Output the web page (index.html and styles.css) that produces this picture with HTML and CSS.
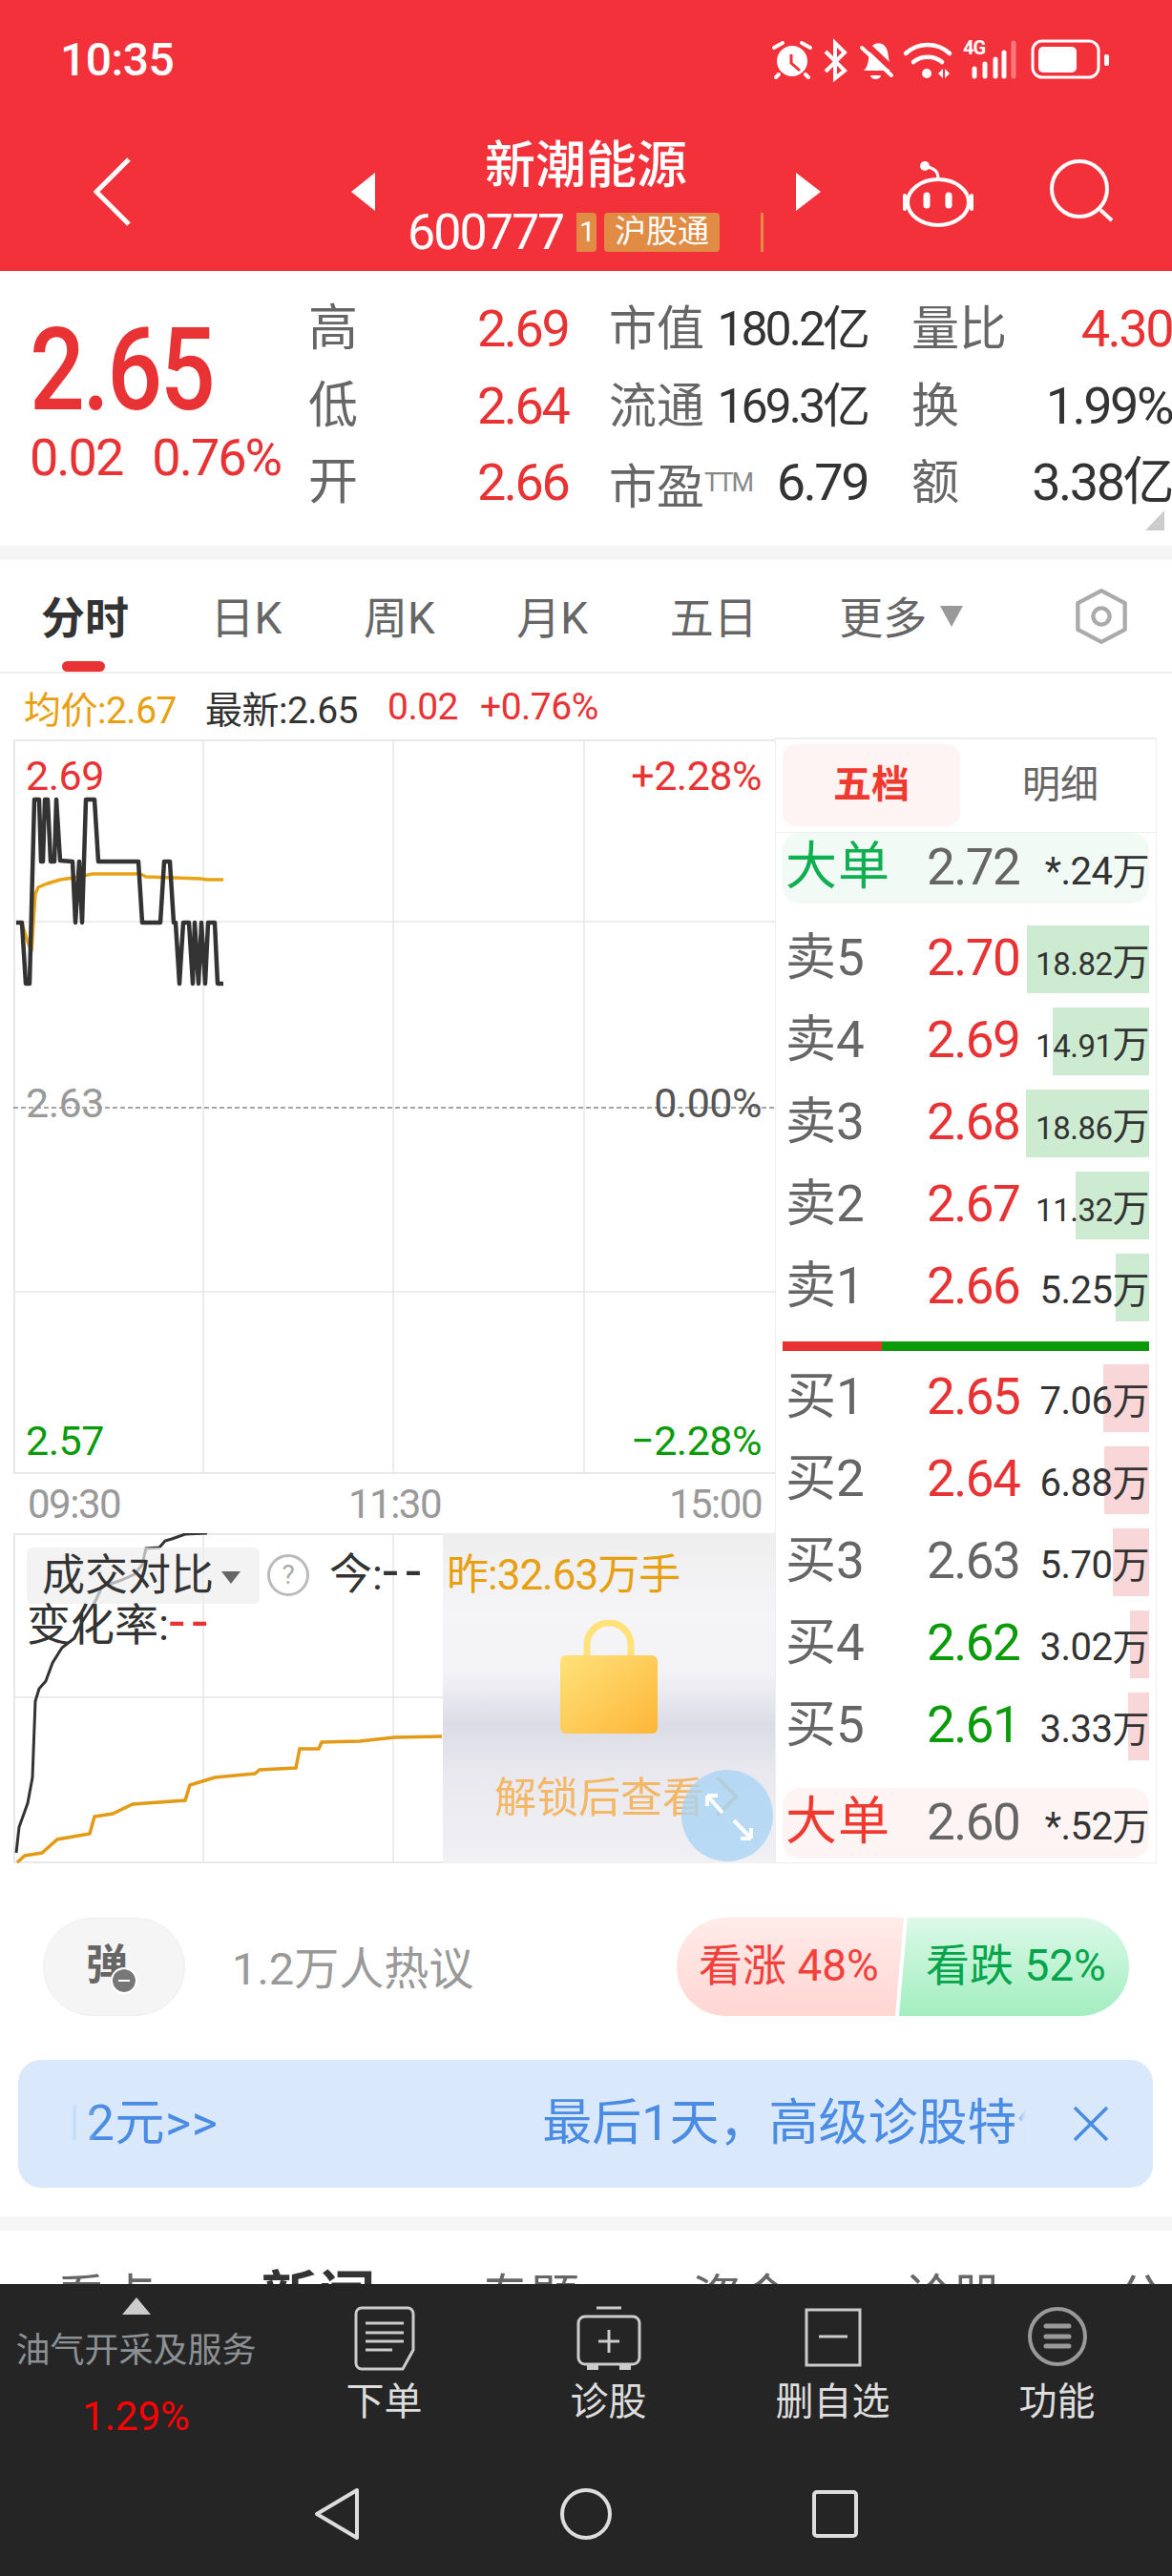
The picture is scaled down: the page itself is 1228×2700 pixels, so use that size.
FILE: index.html
```html
<!DOCTYPE html>
<html lang="zh-CN">
<head>
    <meta charset="UTF-8">
    <meta name="viewport" content="width=device-width, initial-scale=1.0">
    <title>新潮能源 600777</title>
    <link rel="stylesheet" href="styles.css">
</head>
<body>
<div class="page">
    <header class="header">
        <div class="status">
            <span class="clock">10:35</span>
            <svg class="status-icons" viewBox="800 30 370 60" width="370" height="60">
                <circle cx="830" cy="62" r="16" fill="#fff"/>
                <path d="M829 55v9l9 8" fill="none" stroke="#f2313a" stroke-width="3"/>
                <path d="M811 48l9-5M840 43l9 5M816 76l-3 3M844 76l3 3" stroke="#fff" stroke-width="4" stroke-linecap="round"/>
                <path d="M865 52l20 20-10 8V43l10 10-20 20" fill="none" stroke="#fff" stroke-width="4"/>
                <path d="M914 46c5-5 14-3 16 6 1 5 1 8 2 11zM905 72c5-4 5-12 6-20l19 18 3 2z" fill="#fff"/>
                <path d="M903 48l31 29" stroke="#fff" stroke-width="4" stroke-linecap="round"/>
                <path d="M912 77h11a5.5 4 0 0 1-11 0z" fill="#fff"/>
                <path d="M949 54c13-12 33-12 46 0M957 63c8-7 22-7 30 0" fill="none" stroke="#fff" stroke-width="4.5" stroke-linecap="round"/>
                <circle cx="971" cy="75" r="5" fill="#fff"/>
                <path d="M983 75l5-5v10zM990 70l5 5-5 5z" fill="#fff"/>
                <text x="1009" y="55" class="net">4G</text>
                <path d="M1021 70v8M1032 65v13M1043 60v18M1052 53v25" stroke="#fff" stroke-width="5" stroke-linecap="round"/>
                <path d="M1062 43v35" stroke="#fff" stroke-opacity=".35" stroke-width="5" stroke-linecap="round"/>
                <rect x="1082" y="41" width="69" height="38" rx="10" fill="none" stroke="#fff" stroke-width="3"/>
                <rect x="1088" y="47" width="40" height="27" rx="5" fill="#fff"/>
                <rect x="1157" y="55" width="5" height="12" rx="2" fill="#fff"/>
            </svg>
        </div>
        <div class="nav">
            <div class="nav-left">
                <svg width="40" height="72" viewBox="0 0 40 72"><path d="M37 2L3 36l34 34" fill="none" stroke="#fff" stroke-width="5"/></svg>
                <span class="tri-left"></span>
            </div>
            <div class="nav-title">
                <div class="stock-name">新潮能源</div>
                <div class="stock-code">
                    <span class="code">600777</span>
                    <span class="tag tag-cut">1</span>
                    <span class="tag">沪股通</span>
                    <span class="tag-sliver"></span>
                </div>
            </div>
            <div class="nav-right">
                <span class="tri-right"></span>
                <svg class="robot" width="80" height="74" viewBox="0 0 80 74">
                    <ellipse cx="40" cy="48" rx="32" ry="24" fill="none" stroke="#fff" stroke-width="4"/>
                    <path d="M5 41v14M75 41v14" stroke="#fff" stroke-width="4" stroke-linecap="round"/>
                    <path d="M28 41v10M51 41v10" stroke="#fff" stroke-width="7" stroke-linecap="round"/>
                    <path d="M40 23c0-7-4-11-12-12" fill="none" stroke="#fff" stroke-width="3"/>
                    <circle cx="26" cy="10" r="5" fill="#fff"/>
                </svg>
                <svg class="search" width="70" height="70" viewBox="0 0 70 70">
                    <circle cx="32" cy="32" r="29" fill="none" stroke="#fff" stroke-width="4"/>
                    <path d="M54 54l12 11" stroke="#fff" stroke-width="4"/>
                </svg>
            </div>
        </div>
    </header>

    <section class="quote">
        <div class="summary">
            <div class="price">2.65</div>
            <div class="change"><span>0.02</span><span>0.76%</span></div>
        </div>
        <div class="stats">
            <span class="stat-label">高</span><span class="stat-up">2.69</span>
            <div class="stat-pair"><span class="stat-name">市值</span><span class="stat-val long">180.2亿</span></div>
            <div class="stat-pair"><span class="stat-name">量比</span><span class="stat-up">4.30</span></div>
            <span class="stat-label">低</span><span class="stat-up">2.64</span>
            <div class="stat-pair"><span class="stat-name">流通</span><span class="stat-val long">169.3亿</span></div>
            <div class="stat-pair"><span class="stat-name">换</span><span class="stat-val">1.99%</span></div>
            <span class="stat-label">开</span><span class="stat-up">2.66</span>
            <div class="stat-pair"><span class="stat-name">市盈<small class="ttm">TTM</small></span><span class="stat-val">6.79</span></div>
            <div class="stat-pair"><span class="stat-name">额</span><span class="stat-val">3.38亿</span></div>
        </div>
        <span class="corner"></span>
    </section>

    <nav class="tabs">
        <span class="tab active">分时</span>
        <span class="tab">日K</span>
        <span class="tab">周K</span>
        <span class="tab">月K</span>
        <span class="tab">五日</span>
        <span class="tab">更多<i class="tab-arrow"></i></span>
        <svg class="tab-setting" width="60" height="58" viewBox="0 0 56 54">
            <path d="M28 2l23 12v26L28 52 5 40V14z" fill="none" stroke="#aaa" stroke-width="4" stroke-linejoin="round"/>
            <circle cx="28" cy="27" r="8" fill="none" stroke="#aaa" stroke-width="4"/>
        </svg>
    </nav>

    <div class="legend">
        <span class="avg">均价:2.67</span>
        <span class="last">最新:2.65</span>
        <span class="up">0.02</span>
        <span class="up">+0.76%</span>
    </div>

    <section class="market">
        <div class="charts">
            <div class="chart-main">
                <svg class="chart-svg" viewBox="14 775 798 770">
                    <path class="frame" d="M15 775V1545M14 776H812M14 1544H812"/>
                    <path class="grid" d="M213 775V1545M412 775V1545M612 775V1545M14 966H812M14 1354H812"/>
                    <path class="mid" d="M14 1161H812"/>
                    <path class="avg-line" d="M17 967L23 968 29 987 33 997 37 937 40 930 50 926 63 922 77 920 97 916 147 916 153 919 210 921 217 922 234 922"/>
                    <path class="price-line" d="M17 967L23 967 27 1031 31 1031 36 838 41 838 43 903 45 903 47 838 50 838 53 903 57 903 59 838 63 902 76 903 79 967 83 903 86 967 90 838 99 838 103 903 145 903 149 967 168 967 172 903 178 903 182 967 184 967 188 1031 192 967 198 967 202 1031 204 967 208 1031 211 967 215 1031 218 967 225 967 228 1031 234 1031"/>
                </svg>
                <span class="axis-l top up">2.69</span>
                <span class="axis-r top up">+2.28%</span>
                <span class="axis-l mid-l">2.63</span>
                <span class="axis-r mid-r">0.00%</span>
                <span class="axis-l low down">2.57</span>
                <span class="axis-r low down">−2.28%</span>
            </div>
            <div class="time-axis"><span>09:30</span><span>11:30</span><span>15:00</span></div>
            <div class="chart-vol">
                <svg class="chart-svg" viewBox="14 1607 798 346">
                    <path class="frame" d="M15 1607V1953M14 1608H812M14 1952H812"/>
                    <path class="grid" d="M213 1607V1953M412 1607V1953M14 1779H812"/>
                    <path class="vol-today" d="M17 1942L20 1915 29 1890 34 1863 37 1783 41 1770 48 1762 55 1743 65 1727 78 1717 86 1700 99 1680 107 1663 125 1657 141 1650 149 1640 153 1623 167 1622 173 1615 180 1613 194 1608 217 1607"/>
                    <path class="vol-yest" d="M18 1952L26 1945 44 1942 60 1928 94 1922 99 1904 118 1901 139 1891 194 1887 199 1871 225 1863 267 1859 272 1855 310 1853 314 1833 334 1833 337 1826 377 1825 413 1821 463 1820"/>
                </svg>
                <div class="locked">
                    <svg class="lock" width="102" height="120" viewBox="0 0 102 120">
                        <defs>
                            <linearGradient id="lockFill" x1="0" y1="0" x2="1" y2="1">
                                <stop offset="0" stop-color="#ffe27a"/>
                                <stop offset="1" stop-color="#fdb638"/>
                            </linearGradient>
                        </defs>
                        <path d="M28 40V26a23 23 0 0 1 46 0V40" fill="none" stroke="#ffe27a" stroke-width="7"/>
                        <rect x="0" y="37" width="102" height="82" rx="6" fill="url(#lockFill)"/>
                    </svg>
                    <div class="unlock">解锁后查看<span class="unlock-arrow"></span></div>
                </div>
                <div class="vol-head">
                    <span class="vol-pill">成交对比<i class="pill-arrow"></i></span>
                    <span class="help">?</span>
                    <span class="today">今:<b class="dash">--</b></span>
                    <span class="yest">昨:32.63万手</span>
                </div>
                <div class="vol-rate">变化率:<b class="dash up">--</b></div>
                <svg class="expand" width="98" height="98" viewBox="0 0 98 98">
                    <circle cx="49" cy="49" r="48" fill="#a9d4f5" fill-opacity=".78"/>
                    <path d="M44 46L28 28M28 28v11M28 28h11M56 54l18 19M74 73V62M74 73H63" fill="none" stroke="#fff" stroke-width="4"/>
                </svg>
            </div>
        </div>

        <aside class="depth">
            <div class="depth-tabs">
                <span class="depth-tab active">五档</span>
                <span class="depth-tab">明细</span>
            </div>
            <div class="row big big-sell">
                <span class="row-label big-label">大单</span>
                <span class="row-price">2.72</span>
                <span class="row-vol">*.24<em>万</em></span>
            </div>
            <div class="rows sell-rows">
                <div class="row"><i class="bar bar-sell" style="width:128px"></i><span class="row-label">卖5</span><span class="row-price up">2.70</span><span class="row-vol long">18.82<em>万</em></span></div>
                <div class="row"><i class="bar bar-sell" style="width:101px"></i><span class="row-label">卖4</span><span class="row-price up">2.69</span><span class="row-vol long">14.91<em>万</em></span></div>
                <div class="row"><i class="bar bar-sell" style="width:129px"></i><span class="row-label">卖3</span><span class="row-price up">2.68</span><span class="row-vol long">18.86<em>万</em></span></div>
                <div class="row"><i class="bar bar-sell" style="width:77px"></i><span class="row-label">卖2</span><span class="row-price up">2.67</span><span class="row-vol long">11.32<em>万</em></span></div>
                <div class="row"><i class="bar bar-sell" style="width:35px"></i><span class="row-label">卖1</span><span class="row-price up">2.66</span><span class="row-vol">5.25<em>万</em></span></div>
            </div>
            <div class="ratio"><i class="ratio-red" style="width:27%"></i></div>
            <div class="rows buy-rows">
                <div class="row"><i class="bar bar-buy" style="width:48px"></i><span class="row-label">买1</span><span class="row-price up">2.65</span><span class="row-vol">7.06<em>万</em></span></div>
                <div class="row"><i class="bar bar-buy" style="width:47px"></i><span class="row-label">买2</span><span class="row-price up">2.64</span><span class="row-vol">6.88<em>万</em></span></div>
                <div class="row"><i class="bar bar-buy" style="width:38px"></i><span class="row-label">买3</span><span class="row-price">2.63</span><span class="row-vol">5.70<em>万</em></span></div>
                <div class="row"><i class="bar bar-buy" style="width:20px"></i><span class="row-label">买4</span><span class="row-price down">2.62</span><span class="row-vol">3.02<em>万</em></span></div>
                <div class="row"><i class="bar bar-buy" style="width:22px"></i><span class="row-label">买5</span><span class="row-price down">2.61</span><span class="row-vol">3.33<em>万</em></span></div>
            </div>
            <div class="row big big-buy">
                <span class="row-label big-label">大单</span>
                <span class="row-price">2.60</span>
                <span class="row-vol">*.52<em>万</em></span>
            </div>
        </aside>
    </section>

    <div class="social">
        <span class="danmu">弹<i class="danmu-off"></i></span>
        <span class="hot">1.2万人热议</span>
        <div class="vote">
            <span class="vote-up">看涨 48%</span>
            <span class="vote-down">看跌 52%</span>
        </div>
    </div>

    <div class="banner">
        <div class="marquee">
            <span class="marquee-a">12元&gt;&gt;</span>
            <span class="marquee-b">最后1天，高级诊股特价</span>
        </div>
        <svg width="40" height="40" viewBox="0 0 40 40"><path d="M3 3l34 34M37 3L3 37" stroke="#4a8ce4" stroke-width="3.5"/></svg>
    </div>

    <div class="news-tabs">
        <span>看点</span>
        <span class="active">新闻</span>
        <span>专题</span>
        <span>资金</span>
        <span>诊股</span>
        <span>公告</span>
    </div>

    <footer class="bottom">
        <div class="toolbar">
            <div class="sector">
                <i class="sector-arrow"></i>
                <span class="sector-name">油气开采及服务</span>
                <span class="sector-rate">1.29%</span>
            </div>
            <div class="tool">
                <svg width="66" height="70" viewBox="0 0 66 70">
                    <path d="M9 3h48a6 6 0 0 1 6 6v38L52 67H9a6 6 0 0 1-6-6V9a6 6 0 0 1 6-6z" fill="none" stroke="#ccc" stroke-width="3"/>
                    <path d="M13 19h40M13 29h40M13 38h40M13 47h28" stroke="#ccc" stroke-width="3"/>
                </svg>
                <span>下单</span>
            </div>
            <div class="tool">
                <svg width="70" height="70" viewBox="0 0 70 70">
                    <path d="M22 3h26" stroke="#ccc" stroke-width="3"/>
                    <rect x="3" y="12" width="64" height="50" rx="7" fill="none" stroke="#ccc" stroke-width="3"/>
                    <path d="M35 26v24M24 38h22" stroke="#ccc" stroke-width="3"/>
                    <path d="M12 62h12v6H12zM46 62h12v6H46z" fill="#ccc"/>
                </svg>
                <span>诊股</span>
            </div>
            <div class="tool">
                <svg width="66" height="70" viewBox="0 0 66 70">
                    <rect x="5" y="5" width="56" height="58" fill="none" stroke="#ccc" stroke-width="3"/>
                    <path d="M18 33h30" stroke="#ccc" stroke-width="3"/>
                </svg>
                <span>删自选</span>
            </div>
            <div class="tool">
                <svg width="66" height="70" viewBox="0 0 66 70">
                    <circle cx="33" cy="33" r="29" fill="none" stroke="#999" stroke-width="4"/>
                    <path d="M21 22h24M21 33h24M21 43h24" stroke="#999" stroke-width="5" stroke-linecap="round"/>
                </svg>
                <span>功能</span>
            </div>
        </div>
        <div class="sysnav">
            <svg width="50" height="56" viewBox="0 0 50 56"><path d="M46 3L4 28l42 25z" fill="none" stroke="#ddd" stroke-width="4" stroke-linejoin="round"/></svg>
            <svg width="56" height="56" viewBox="0 0 56 56"><circle cx="28" cy="28" r="25" fill="none" stroke="#ddd" stroke-width="4"/></svg>
            <svg width="50" height="52" viewBox="0 0 50 52"><rect x="3" y="3" width="44" height="46" rx="3" fill="none" stroke="#ddd" stroke-width="4"/></svg>
        </div>
    </footer>
</div>
</body>
</html>
```

FILE: styles.css
```css
* {
    box-sizing: border-box;
}

body {
    margin: 0;
    font-family: Roboto, "Noto Sans CJK SC", sans-serif;
    color: #333;
    background-color: white;
}

.page {
    position: relative;
    width: 1228px;
    height: 2700px;
    overflow: hidden;
}

.up {
    color: #e83234;
}

.down {
    color: #0a9a0a;
}

/* header */
.header {
    height: 284px;
    background-color: #f2313a;
    color: white;
}

.status {
    height: 124px;
    display: flex;
    align-items: center;
    justify-content: space-between;
    padding: 0 58px 0 63px;
}

.clock {
    font-size: 48px;
    font-weight: 500;
    letter-spacing: -.5px;
}

.net {
    font-size: 20px;
    font-weight: 700;
    letter-spacing: -1px;
    fill: white;
}

.nav {
    height: 160px;
    display: grid;
    grid-template-columns: 394px 440px 394px;
}

.nav-left {
    display: flex;
    align-items: center;
    justify-content: space-between;
    padding: 0 1px 6px 98px;
}

.tri-left {
    border-top: 20px solid transparent;
    border-bottom: 20px solid transparent;
    border-right: 25px solid white;
}

.tri-right {
    border-top: 20px solid transparent;
    border-bottom: 20px solid transparent;
    border-left: 26px solid white;
}

.nav-right {
    display: flex;
    align-items: center;
    padding-bottom: 6px;
}

.robot {
    margin-left: 83px;
}

.search {
    margin-left: 76px;
}

.nav-title {
    padding-top: 20px;
    text-align: center;
}

.stock-name {
    font-size: 53px;
    line-height: 60px;
    font-weight: 500;
}

.stock-code {
    display: flex;
    align-items: center;
    height: 42px;
    margin-top: 18px;
    padding-left: 33px;
}

.code {
    width: 171px;
    font-size: 52px;
    letter-spacing: -2px;
    text-align: left;
}

.tag {
    height: 41px;
    line-height: 40px;
    padding: 0 11px;
    font-size: 33px;
    background-color: #e08c45;
    border-radius: 4px;
    margin-left: 8px;
}

.tag-cut {
    width: 21px;
    padding: 0 0 0 2px;
    margin-left: 6px;
    border-radius: 0 4px 4px 0;
    font-size: 30px;
}

.tag-sliver {
    width: 3px;
    height: 41px;
    margin-left: 43px;
    background-color: #e08c45;
}

/* quote */
.quote {
    position: relative;
    height: 303px;
    display: flex;
    border-bottom: 15px solid #f5f5f5;
}

.summary {
    width: 323px;
    padding: 54px 0 0 31px;
    color: #e83234;
}

.price {
    font-size: 120px;
    line-height: 100px;
    font-weight: 500;
    letter-spacing: -3px;
    transform: scaleX(.85);
    transform-origin: left;
}

.change {
    display: flex;
    gap: 31px;
    margin-top: 18px;
    font-size: 54px;
    line-height: 48px;
    letter-spacing: -2px;
}

.stats {
    display: grid;
    grid-template-columns: 177px 138px 271px 319px;
    grid-auto-rows: 80.5px;
    padding-top: 21px;
    font-size: 54px;
    line-height: 80px;
    letter-spacing: -2.5px;
}

.stats > :nth-child(4n) {
    margin-left: 46px;
}

.stat-label,
.stat-name {
    font-size: 52px;
    color: #666;
    letter-spacing: 0;
}

.stat-name {
    font-size: 50px;
}

.stat-up {
    color: #e83234;
}

.stat-pair {
    display: flex;
    justify-content: space-between;
}

.stat-val {
    color: #333;
}

.stat-val.long {
    font-size: 50px;
    letter-spacing: -3px;
}

.ttm {
    font-size: 27px;
    vertical-align: 13px;
    color: #888;
    letter-spacing: -2px;
}

.corner {
    position: absolute;
    right: 8px;
    bottom: 16px;
    border-left: 20px solid transparent;
    border-bottom: 21px solid #ccc;
}

/* tabs */
.tabs {
    display: flex;
    align-items: center;
    gap: 85.5px;
    height: 119px;
    padding: 0 0 3px 43px;
    border-bottom: 2px solid #eee;
    font-size: 46px;
    color: #666;
}

.tab {
    position: relative;
    white-space: nowrap;
}

.tab.active {
    font-weight: 700;
    color: #333;
}

.tab.active::after {
    content: "";
    position: absolute;
    left: 22px;
    bottom: -27px;
    width: 45px;
    height: 11px;
    border-radius: 6px;
    background-color: #e83234;
}

.tab-arrow {
    display: inline-block;
    margin-left: 14px;
    vertical-align: 7px;
    border-left: 12px solid transparent;
    border-right: 12px solid transparent;
    border-top: 22px solid #999;
}

.tab-setting {
    margin: 4px 0 0 29px;
}

.legend {
    display: flex;
    align-items: center;
    height: 67px;
    padding: 2px 0 0 25px;
    font-size: 39px;
    letter-spacing: -.5px;
}

.avg {
    color: #e8a010;
    width: 190px;
}

.last {
    width: 191px;
}

.legend .up:nth-child(3) {
    width: 97px;
}

/* chart + depth */
.market {
    display: flex;
    padding-left: 14px;
    height: 1180px;
}

.charts {
    width: 798px;
}

.chart-main {
    position: relative;
    height: 770px;
    margin-top: 2px;
    font-size: 43px;
    letter-spacing: -.5px;
}

.chart-svg {
    display: block;
    width: 100%;
    height: 100%;
}

.frame {
    fill: none;
    stroke: #e8e8e8;
    stroke-width: 2;
}

.grid {
    fill: none;
    stroke: #e6e6e6;
    stroke-width: 1.5;
}

.mid {
    fill: none;
    stroke: #888;
    stroke-width: 1.5;
    stroke-dasharray: 5 3;
}

.avg-line {
    fill: none;
    stroke: #e8a317;
    stroke-width: 3.5;
}

.price-line {
    fill: none;
    stroke: #333;
    stroke-width: 4.5;
    stroke-linejoin: round;
}

.axis-l,
.axis-r {
    position: absolute;
    line-height: 44px;
}

.axis-l {
    left: 13px;
}

.axis-r {
    right: 14px;
}

.top {
    top: 16px;
}

.mid-l {
    top: 359px;
    color: #999;
}

.mid-r {
    top: 359px;
    color: #555;
}

.low {
    top: 713px;
}

.time-axis {
    display: flex;
    justify-content: space-between;
    align-items: center;
    height: 60px;
    padding: 2px 14px 0 15px;
    font-size: 42px;
    color: #999;
    letter-spacing: -1.5px;
}

.chart-vol {
    position: relative;
    height: 346px;
    margin-top: 2px;
}

.vol-today {
    fill: none;
    stroke: #333;
    stroke-width: 3;
}

.vol-yest {
    fill: none;
    stroke: #e39a16;
    stroke-width: 3.5;
}

.locked {
    position: absolute;
    top: 0;
    left: 450px;
    width: 348px;
    height: 346px;
    padding-top: 91px;
    display: flex;
    flex-direction: column;
    align-items: center;
    background: linear-gradient(180deg, #eeeeee 0, #f5f5f8 25%, #f3f3f6 42%, #dcdce6 58%, #e8e8ee 72%, #f1f1f4 100%);
}

.lock {
    filter: blur(.7px);
}

.unlock {
    margin-top: 37px;
    padding-left: 10px;
    font-size: 44px;
    line-height: 60px;
    color: #f3b765;
    filter: blur(.7px);
    white-space: nowrap;
}

.unlock-arrow {
    display: inline-block;
    width: 30px;
    height: 30px;
    margin: 0 0 2px 0;
    border-top: 4px solid #d8b87a;
    border-right: 4px solid #d8b87a;
    transform: rotate(45deg);
}

.vol-head {
    position: absolute;
    top: 14px;
    left: 14px;
    display: flex;
    align-items: center;
    font-size: 45px;
    line-height: 60px;
    white-space: nowrap;
}

.vol-pill {
    width: 244px;
    height: 59px;
    padding-left: 16px;
    border-radius: 6px;
    background-color: rgba(238, 238, 238, .7);
}

.pill-arrow {
    display: inline-block;
    margin-left: 8px;
    vertical-align: 7px;
    border-left: 10px solid transparent;
    border-right: 10px solid transparent;
    border-top: 13px solid #666;
}

.help {
    width: 44px;
    height: 44px;
    margin-left: 8px;
    border: 3px solid #bbb;
    border-radius: 50%;
    font-size: 28px;
    line-height: 38px;
    text-align: center;
    color: #aaa;
}

.today {
    margin-left: 21px;
    width: 123px;
}

.yest {
    color: #e8a010;
    font-size: 44px;
    letter-spacing: -1px;
}

.dash {
    font-size: 58px;
    font-weight: 400;
    line-height: 0;
    letter-spacing: 8px;
}

.vol-rate {
    position: absolute;
    top: 71px;
    left: 14px;
    font-size: 46px;
    line-height: 50px;
}

.expand {
    position: absolute;
    right: 1px;
    bottom: 1px;
}

.depth {
    width: 400px;
    height: 1180px;
    padding: 0 7px;
    border: 1px solid #eee;
    border-top-width: 2px;
}

.depth-tabs {
    display: flex;
    height: 98px;
    margin: 0 -7px;
    padding: 5px 7px 0;
    border-bottom: 1px solid #eee;
}

.depth-tab {
    flex: none;
    width: 186px;
    height: 86px;
    line-height: 86px;
    text-align: center;
    font-size: 40px;
    color: #666;
}

.depth-tab:last-child {
    width: 210px;
}

.depth-tab.active {
    background-color: #fff4f4;
    border-radius: 14px;
    color: #f03a30;
    font-weight: 700;
}

.row {
    position: relative;
    display: flex;
    align-items: baseline;
    height: 71px;
    padding: 0 0 0 3px;
    line-height: 68px;
}

.bar {
    position: absolute;
    top: 0;
    right: 0;
    height: 71px;
}

.bar-sell {
    background-color: #cdebd0;
}

.bar-buy {
    background-color: #f9d7d9;
}

.row-label {
    position: relative;
    width: 148px;
    font-size: 53px;
    color: #666;
}

.big-label {
    font-size: 54px;
    letter-spacing: 1px;
}

.row-price {
    position: relative;
    font-size: 53px;
    letter-spacing: -1.5px;
    color: #666;
}

.row-price.up {
    color: #e83234;
}

.row-price.down {
    color: #0a9a0a;
}

.row-vol {
    position: relative;
    margin-left: auto;
    font-size: 40px;
    letter-spacing: -.5px;
    color: #333;
}

.row-vol.long {
    font-size: 33px;
}

.row-vol em {
    font-style: normal;
    font-size: 39px;
}

.big {
    height: 74px;
    border-radius: 18px;
    line-height: 72px;
}

.big-sell {
    background-color: #f1faf5;
}

.big-sell .big-label {
    color: #0daf50;
}

.big-buy {
    margin-top: 29px;
    background-color: #fff4f4;
}

.big-buy .big-label {
    color: #f03a30;
}

.rows {
    display: flex;
    flex-direction: column;
    gap: 15px;
}

.sell-rows {
    margin-top: 23px;
}

.ratio {
    height: 10px;
    margin: 21px 0 14px;
    background-color: #0a9a0a;
}

.ratio-red {
    display: block;
    height: 100%;
    background-color: #e83234;
}

/* social */
.social {
    display: flex;
    align-items: center;
    height: 103px;
    margin: 57px 45px 0;
}

.danmu {
    position: relative;
    width: 149px;
    height: 103px;
    border-radius: 52px;
    background-color: #f5f5f5;
    border: 1px solid #eee;
    padding-left: 44px;
    font-size: 44px;
    font-weight: 700;
    line-height: 98px;
    color: #666;
}

.danmu-off {
    position: absolute;
    left: 72px;
    top: 53px;
    width: 24px;
    height: 24px;
    border-radius: 50%;
    background-color: #777;
    outline: 2px solid white;
}

.danmu-off::after {
    content: "";
    position: absolute;
    left: 6px;
    top: 11px;
    width: 12px;
    height: 2px;
    background-color: white;
}

.hot {
    margin: 0 0 4px 49px;
    font-size: 47px;
    color: #999;
}

.vote {
    display: flex;
    margin-left: auto;
    width: 474px;
    height: 103px;
    font-size: 46px;
    line-height: 100px;
}

.vote-up {
    width: 238px;
    padding-left: 23px;
    border-radius: 52px 0 0 52px;
    background: linear-gradient(180deg, #ffecea, #ffd6d2);
    color: #f2413d;
    clip-path: polygon(0 0, 100% 0, calc(100% - 9px) 100%, 0 100%);
}

.vote-down {
    width: 241px;
    margin-left: -5px;
    padding-left: 28px;
    border-radius: 0 52px 52px 0;
    background: linear-gradient(180deg, #dcf9e8, #a2eebf);
    color: #05a64b;
    clip-path: polygon(9px 0, 100% 0, 100% 100%, 0 100%);
}

/* banner */
.banner {
    display: flex;
    align-items: center;
    height: 134px;
    margin: 46px 20px 30px 19px;
    padding: 0 45px 0 56px;
    background-color: #d9e8fb;
    border-radius: 24px;
    font-size: 52px;
    line-height: 60px;
    color: #4a8ce4;
}

.banner svg {
    margin-left: auto;
}

.marquee {
    display: flex;
    width: 1000px;
    overflow: hidden;
    white-space: nowrap;
    -webkit-mask-image: linear-gradient(90deg, transparent 0, black 25px, black 985px, transparent 1000px);
    mask-image: linear-gradient(90deg, transparent 0, black 25px, black 985px, transparent 1000px);
}

.marquee-a {
    margin-left: -14px;
    letter-spacing: .5px;
}

.marquee-b {
    margin-left: 340px;
}

/* news tabs, mostly under the bottom bar */
.news-tabs {
    display: grid;
    grid-template-columns: repeat(6, 222px);
    height: 120px;
    padding-top: 42px;
    border-top: 15px solid #f5f5f5;
    font-size: 52px;
    line-height: 60px;
    color: #666;
    text-align: center;
}

.news-tabs .active {
    font-size: 60px;
    font-weight: 700;
    color: #333;
}

/* bottom bar */
.bottom {
    position: absolute;
    left: 0;
    right: 0;
    bottom: 0;
    height: 306px;
    background-color: #252525;
}

.toolbar {
    display: grid;
    grid-template-columns: 285px repeat(4, 235px);
    height: 176px;
}

.sector {
    display: flex;
    flex-direction: column;
    align-items: center;
    padding-top: 14px;
    color: #8b9094;
}

.sector-arrow {
    border-left: 15px solid transparent;
    border-right: 15px solid transparent;
    border-bottom: 18px solid #ccc;
}

.sector-name {
    margin-top: 16px;
    font-size: 36px;
    line-height: 44px;
}

.sector-rate {
    margin-top: 25px;
    font-size: 42px;
    line-height: 44px;
    color: #f00;
}

.tool {
    display: flex;
    flex-direction: column;
    align-items: center;
    padding-top: 22px;
    font-size: 40px;
    line-height: 50px;
    color: #ddd;
}

.tool span {
    margin-top: 7px;
}

.sysnav {
    display: flex;
    justify-content: center;
    align-items: center;
    gap: 208px;
    height: 130px;
}
```
